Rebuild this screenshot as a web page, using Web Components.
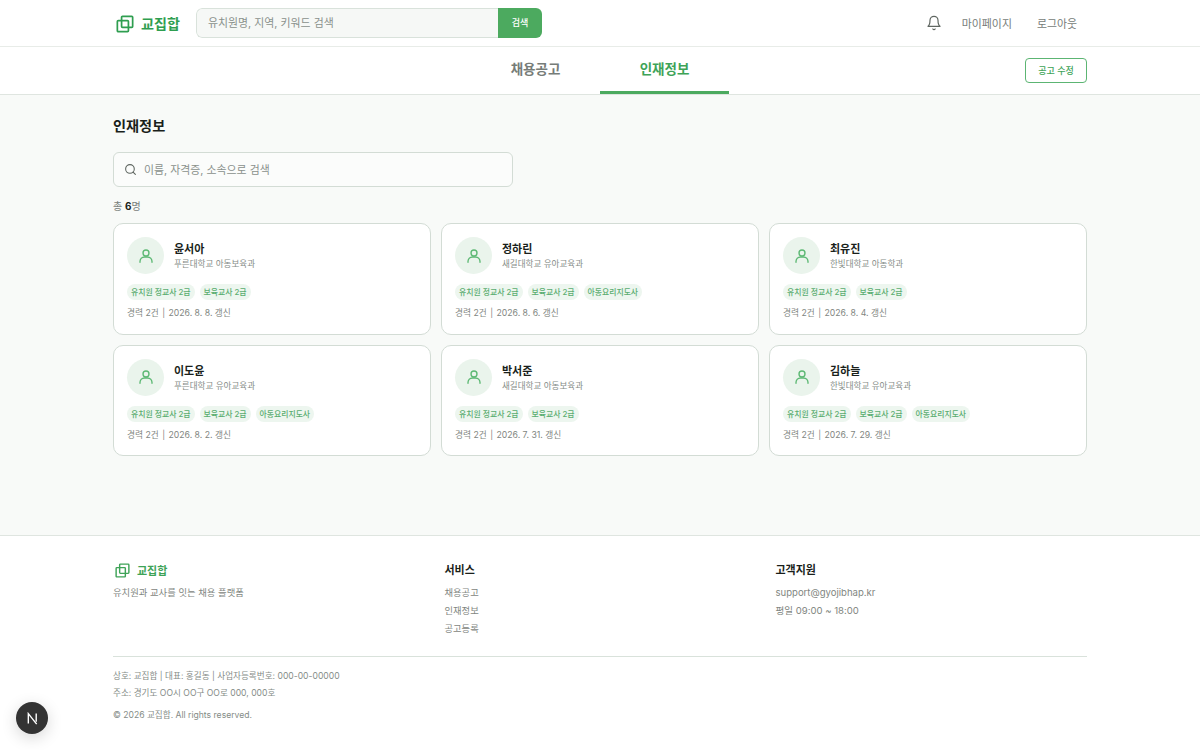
<!DOCTYPE html>
<html lang="ko">
<head>
<meta charset="utf-8">
<title>교집합 - 인재정보</title>
<style>
html,body{margin:0;padding:0;background:#fff;}
body{font-family:Inter,"Noto Sans CJK KR",sans-serif;color:#1a1f1b;}
</style>
</head>
<body>
<app-page>
  <site-header></site-header>
  <tab-nav></tab-nav>
  <talent-list>
    <talent-card name="윤서아" school="푸른대학교 아동보육과" tags="유치원 정교사 2급,보육교사 2급" meta="경력 2건|2026. 8. 8. 갱신"></talent-card>
    <talent-card name="정하린" school="새길대학교 유아교육과" tags="유치원 정교사 2급,보육교사 2급,아동요리지도사" meta="경력 2건|2026. 8. 6. 갱신"></talent-card>
    <talent-card name="최유진" school="한빛대학교 아동학과" tags="유치원 정교사 2급,보육교사 2급" meta="경력 2건|2026. 8. 4. 갱신"></talent-card>
    <talent-card name="이도윤" school="푸른대학교 유아교육과" tags="유치원 정교사 2급,보육교사 2급,아동요리지도사" meta="경력 2건|2026. 8. 2. 갱신"></talent-card>
    <talent-card name="박서준" school="새길대학교 아동보육과" tags="유치원 정교사 2급,보육교사 2급" meta="경력 2건|2026. 7. 31. 갱신"></talent-card>
    <talent-card name="김하늘" school="한빛대학교 유아교육과" tags="유치원 정교사 2급,보육교사 2급,아동요리지도사" meta="경력 2건|2026. 7. 29. 갱신"></talent-card>
  </talent-list>
  <site-footer></site-footer>
</app-page>
<next-badge></next-badge>
<script>
const LOGO = `<svg viewBox="0 0 20 20" width="100%" height="100%" fill="none" stroke="currentColor" stroke-width="1.9"><rect x="1.5" y="6.2" width="12.3" height="12.3" rx="1"/><rect x="6.2" y="1.5" width="12.3" height="12.3" rx="1"/></svg>`;

function define(name, html, props) {
  const template = document.createElement('template');
  template.innerHTML = html;
  customElements.define(name, class extends HTMLElement {
    constructor() {
      super();
      this.attachShadow({mode:'open'}).appendChild(template.content.cloneNode(true));
    }
    connectedCallback() { if (props) props.call(this, this.shadowRoot); }
  });
}

define('app-page', `<style>:host{display:block;}</style><slot></slot>`);

define('site-header', `
<style>
:host{display:block;height:46px;border-bottom:1px solid #e8ece8;background:#fff;box-sizing:content-box;}
.in{display:flex;align-items:center;height:46px;padding:0 113px 0 116px;}
.logo{display:flex;align-items:center;gap:7px;color:#2f9e50;font-size:14.1px;font-weight:700;width:80px;}
.logo i{display:block;width:18px;height:18px;margin-top:1px;}
.search{display:flex;width:346px;height:30px;box-sizing:border-box;border-radius:6px;overflow:hidden;}
.field{flex:1;background:#f6f8f6;border:1px solid #d9e2db;border-right:0;border-radius:6px 0 0 6px;padding-left:11px;font-size:10.9px;color:#8a918c;line-height:28px;}
.btn{width:44px;background:#4caa5f;color:#fff;font-size:9px;font-weight:500;text-align:center;line-height:30px;}
.right{margin-left:auto;display:flex;align-items:center;font-size:10.9px;color:#767c78;padding-right:10px;}
svg.bell{width:16px;height:16px;margin-right:20px;color:#5f6661;}
.right span+span{margin-left:25px;}
</style>
<div class="in">
  <div class="logo"><i>${LOGO}</i><span>교집합</span></div>
  <div class="search"><div class="field">유치원명, 지역, 키워드 검색</div><div class="btn">검색</div></div>
  <div class="right">
    <svg class="bell" viewBox="0 0 24 24" fill="none" stroke="currentColor" stroke-width="1.8" stroke-linecap="round" stroke-linejoin="round"><path d="M6 8a6 6 0 0 1 12 0c0 7 3 9 3 9H3s3-2 3-9"/><path d="M10.3 21a1.94 1.94 0 0 0 3.4 0"/></svg>
    <span>마이페이지</span><span>로그아웃</span>
  </div>
</div>`);

define('tab-nav', `
<style>
:host{display:block;height:47px;border-bottom:1px solid #dfe5e0;background:#fff;}
.in{display:grid;grid-template-columns:1fr auto 1fr;align-items:center;height:47px;padding:0 113px;}
.tabs{display:flex;grid-column:2;}
.tab{width:129px;height:47px;box-sizing:border-box;text-align:center;line-height:44px;font-size:13.5px;font-weight:600;color:#767c78;}
.tab.on{color:#3ea357;border-bottom:3px solid #4caa5f;}
.act{justify-self:end;width:62px;height:25px;box-sizing:border-box;border:1px solid #5cb573;border-radius:4px;color:#3ea357;font-size:9px;font-weight:500;text-align:center;line-height:23px;background:#fff;}
</style>
<div class="in">
  <div class="tabs"><div class="tab">채용공고</div><div class="tab on">인재정보</div></div>
  <div class="act">공고 수정</div>
</div>`);

define('talent-list', `
<style>
:host{display:block;background:#f8faf8;height:440px;padding:0 113px;box-sizing:border-box;}
h1{margin:0;padding-top:21px;font-size:14.2px;line-height:20px;font-weight:700;color:#1a1f1b;}
.search{display:flex;align-items:center;margin-top:16px;width:400px;height:35px;box-sizing:border-box;background:#fbfcfb;border:1px solid #d3dcd5;border-radius:6px;padding:0 0 1px 10px;font-size:10.9px;color:#8a918c;}
.search svg{width:13px;height:13px;margin-right:7px;color:#5f6661;}
.count{margin-top:12px;height:14px;line-height:14px;font-size:10px;color:#7a817c;}
.count b{color:#1a1f1b;font-weight:700;}
.grid{display:grid;grid-template-columns:repeat(3,1fr);gap:10px;margin-top:10px;}
</style>
<h1>인재정보</h1>
<div class="search"><svg viewBox="0 0 24 24" fill="none" stroke="currentColor" stroke-width="2" stroke-linecap="round"><circle cx="11" cy="11" r="8"/><path d="m21 21-4.3-4.3"/></svg>이름, 자격증, 소속으로 검색</div>
<div class="count">총 <b>6</b>명</div>
<div class="grid"><slot></slot></div>`);

define('talent-card', `
<style>
:host{display:block;height:111.5px;box-sizing:border-box;background:#fff;border:1px solid #d3dcd5;border-radius:10px;padding:13px 13px 0;}
.top{display:flex;align-items:center;gap:10px;}
.av{width:37px;height:37px;border-radius:50%;background:#eaf4ec;display:flex;align-items:center;justify-content:center;color:#5cb873;}
.av svg{width:14px;height:14px;}
.txt{margin-top:2px;}
.name{font-size:11px;line-height:15px;font-weight:600;color:#1a1f1b;}
.school{font-size:8.55px;line-height:14px;color:#858c87;}
.tags{display:flex;gap:5px;margin-top:10px;}
.tag{height:16px;line-height:16px;padding:0 4px;border-radius:8px;background:#edf6ef;color:#5aad70;font-size:7.85px;font-weight:500;}
.meta{margin-top:6px;font-size:8.7px;line-height:14px;color:#7f8681;}
.meta i{font-style:normal;margin:0 1px;}
</style>
<div class="top">
  <div class="av"><svg viewBox="0 0 14 14" fill="none" stroke="currentColor" stroke-width="1.35" stroke-linecap="round" stroke-linejoin="round"><circle cx="7" cy="4" r="3"/><path d="M1 13.2v-.7A4.5 4.5 0 0 1 5.5 8h3a4.5 4.5 0 0 1 4.5 4.5v.7"/></svg></div>
  <div class="txt"><div class="name"></div><div class="school"></div></div>
</div>
<div class="tags"></div>
<div class="meta"></div>`, function (root) {
  root.querySelector('.name').textContent = this.getAttribute('name');
  root.querySelector('.school').textContent = this.getAttribute('school');
  const [career, updated] = this.getAttribute('meta').split('|');
  const meta = root.querySelector('.meta');
  meta.append(career + ' ');
  const sep = document.createElement('i');
  sep.textContent = '|';
  meta.append(sep, ' ' + updated);
  const tags = root.querySelector('.tags');
  tags.textContent = '';
  this.getAttribute('tags').split(',').forEach(t => {
    const el = document.createElement('span');
    el.className = 'tag';
    el.textContent = t;
    tags.appendChild(el);
  });
});

define('site-footer', `
<style>
:host{display:block;height:215px;box-sizing:border-box;border-top:1px solid #dfe5e0;background:#fff;padding:0 113px;}
.cols{display:grid;grid-template-columns:331.5px 331px 1fr;height:120px;box-sizing:border-box;padding-top:26px;}
.logo{display:flex;align-items:center;gap:7px;color:#3ea357;font-size:11px;font-weight:700;padding-left:2px;height:16px;}
.logo i{display:block;width:15px;height:15px;}
.desc{font-size:9.35px;line-height:14px;color:#7f8681;margin-top:8px;}
h4{margin:0;font-size:11px;line-height:16px;font-weight:600;color:#1a1f1b;}
.col div{font-size:9.3px;line-height:18px;color:#7f8681;}
.col div.en{font-size:9.55px;}
.col h4+div{margin-top:6px;}
.legal{border-top:1px solid #d9e2db;padding-top:11px;font-size:8.6px;line-height:17px;color:#858c87;}
.legal p{margin:0;}
.legal p.c{margin-top:5px;}
</style>
<div class="cols">
  <div><div class="logo"><i>${LOGO}</i><span>교집합</span></div><div class="desc">유치원과 교사를 잇는 채용 플랫폼</div></div>
  <div class="col"><h4>서비스</h4><div>채용공고</div><div>인재정보</div><div>공고등록</div></div>
  <div class="col"><h4>고객지원</h4><div class="en">support@gyojibhap.kr</div><div class="en">평일 09:00 ~ 18:00</div></div>
</div>
<div class="legal">
  <p>상호: 교집합 | 대표: 홍길동 | 사업자등록번호: 000-00-00000</p>
  <p>주소: 경기도 OO시 OO구 OO로 000, 000호</p>
  <p class="c">© 2026 교집합. All rights reserved.</p>
</div>`);

define('next-badge', `
<style>
:host{position:fixed;left:16px;bottom:16px;width:32px;height:32px;border-radius:50%;background:#333;box-shadow:0 4px 16px rgba(0,0,0,.16);display:flex;align-items:center;justify-content:center;}
svg{width:13px;height:13px;color:#fff;}
</style>
<svg viewBox="0 0 14 14" fill="none" stroke="currentColor" stroke-width="1.5"><path d="M2.5 12.5V1.8L11.5 13"/><path d="M11 1.5v9"/></svg>`);
</script>
</body>
</html>
